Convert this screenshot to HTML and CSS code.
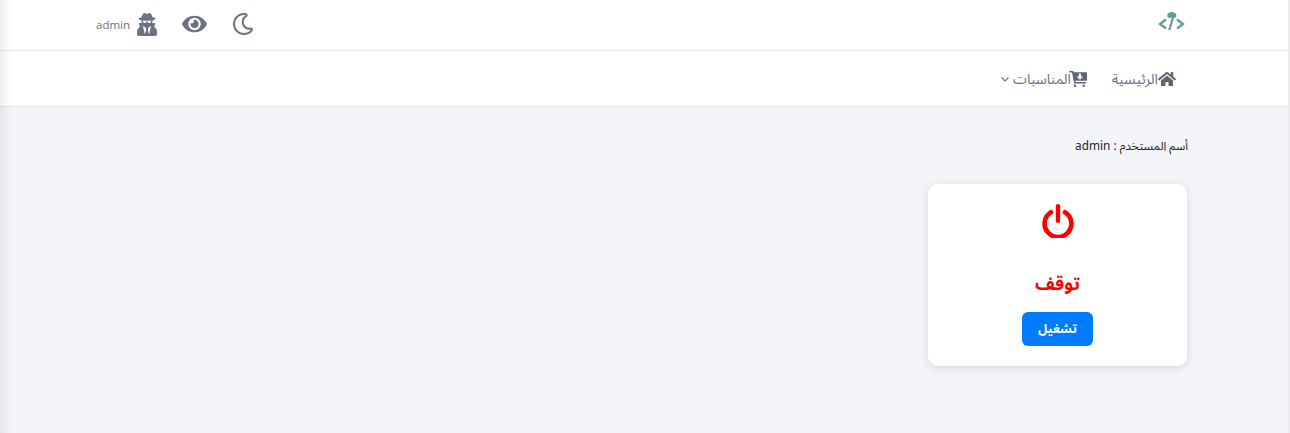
FILE: index.html
```html
<!DOCTYPE html>
<html lang="ar" dir="rtl">
<head>
<meta charset="utf-8">
<title>لوحة التحكم</title>
<link rel="stylesheet" href="styles.css">
</head>
<body>
<div class="side-shadow"></div>
<div class="app">
  <header class="topbar">
    <a class="logo" href="#">
      <svg width="27" height="18" viewBox="0 0 27 18"><g fill="none" stroke="#5f9c97" stroke-width="2.2"><path d="M8 7.500 2 12l6 4.500"/><path d="M19 7.500 25 12l-6 4.500"/><path d="M14.800 6 11.500 17.500" stroke-linecap="round"/></g><path fill="#5f9c97" d="M13.500 0c2.200 0 4.300 1 4.800 2.800.4 1.500-.5 3-1.700 3.200-.8.200-1.500-.4-2.300-.4-.9 0-1.900.9-3 .5-1.500-.5-2.400-2-1.900-3.500C9.900 1 11.700 0 13.500 0z"/></svg>
    </a>
    <div class="tools">
      <svg class="ico-moon" viewBox="0 0 512 512"><path d="M279.135 512c78.756 0 150.982-35.804 198.844-94.775 28.27-34.831-2.558-85.722-46.249-77.401-82.348 15.683-158.272-47.268-158.272-130.792 0-48.424 26.06-92.292 67.434-115.836 38.745-22.05 28.999-80.788-15.022-88.919A257.936 257.936 0 0 0 279.135 0c-141.36 0-256 114.575-256 256 0 141.36 114.576 256 256 256zm0-464c12.985 0 25.689 1.201 38.016 3.478-54.76 31.163-91.693 90.042-91.693 157.554 0 113.848 103.641 199.2 215.252 177.944C402.574 433.964 344.366 464 279.135 464c-114.875 0-208-93.125-208-208s93.125-208 208-208z"/></svg>
      <svg class="ico-eye" viewBox="0 0 576 512"><path d="M572.52 241.4C518.29 135.59 410.93 64 288 64S57.68 135.64 3.48 241.41a32.35 32.35 0 0 0 0 29.19C57.71 376.41 165.07 448 288 448s230.32-71.64 284.52-177.41a32.35 32.35 0 0 0 0-29.19zM288 400a144 144 0 1 1 144-144 143.93 143.93 0 0 1-144 144zm0-240a95.31 95.31 0 0 0-25.31 3.79 47.85 47.85 0 0 1-66.9 66.9A95.78 95.78 0 1 0 288 160z"/></svg>
      <div class="user">
        <svg class="ico-user" viewBox="0 0 448 512"><path d="M383.9 308.3l23.9-62.6c4-10.5-3.7-21.7-15-21.7h-58.5c11-18.9 17.8-40.6 17.8-64v-.3c39.2-7.8 64-19.1 64-31.7 0-13.3-27.3-25.1-70.1-33-9.2-32.8-27-65.8-40.6-82.8-9.5-11.9-25.9-15.6-39.5-8.8l-27.6 13.8c-9 4.5-19.6 4.5-28.6 0L182.1 3.4c-13.6-6.8-30-3.1-39.5 8.8-13.5 17-31.4 50-40.6 82.8-42.7 7.9-70 19.7-70 33 0 12.6 24.8 23.9 64 31.7v.3c0 23.4 6.8 45.1 17.8 64H56.3c-11.500 0-19.2 11.7-14.7 22.3l25.8 60.2C27.3 329.8 0 372.7 0 422.4v44.8C0 491.9 20.1 512 44.8 512h358.4c24.7 0 44.8-20.1 44.8-44.8v-44.8c0-48.4-25.8-90.4-64.1-114.1zM176 480l-41.6-192 49.6 32 24 40-32 120zm96 0l-32-120 24-40 49.6-32L272 480zm41.7-298.5c-3.9 11.9-7 24.6-16.5 33.4-10.1 9.3-48 22.4-64-25-2.8-8.4-15.4-8.4-18.3 0-17 50.2-56 32.4-64 25-9.5-8.8-12.7-21.5-16.5-33.4-.8-2.5-6.3-5.7-6.3-5.8v-10.8c28.3 3.6 61 5.8 96 5.8s67.7-2.1 96-5.8v10.8c-.1.1-5.6 3.2-6.4 5.8z"/></svg>
        <span class="user-name">admin</span>
      </div>
    </div>
  </header>
  <nav class="navbar">
    <a class="nav-item" href="#">
      <svg class="ico-nav" viewBox="0 0 576 512"><path d="M280.37 148.26L96 300.11V464a16 16 0 0 0 16 16l112.06-.29a16 16 0 0 0 15.92-16V368a16 16 0 0 1 16-16h64a16 16 0 0 1 16 16v95.64a16 16 0 0 0 16 16.05L464 480a16 16 0 0 0 16-16V300L295.67 148.26a12.19 12.19 0 0 0-15.3 0zM571.6 251.47L488 182.56V44.05a12 12 0 0 0-12-12h-56a12 12 0 0 0-12 12v72.61L318.47 43a48 48 0 0 0-61 0L4.34 251.47a12 12 0 0 0-1.6 16.9l25.5 31A12 12 0 0 0 45.15 301l235.22-193.74a12.19 12.19 0 0 1 15.3 0L530.9 301a12 12 0 0 0 16.9-1.6l25.5-31a12 12 0 0 0-1.7-16.93z"/></svg>
      <span>الرئيسية</span>
    </a>
    <a class="nav-item nav-events" href="#">
      <svg class="ico-nav" viewBox="0 0 576 512"><path fill-rule="evenodd" d="M16 0h110c8 0 14 5 16 12l6 28h412c9 0 16 7 16 16v240c0 9-7 16-16 16H200l8 40h330c6 0 8 4 6 9l-8 31c-1 4-4 6-8 6H176c-8 0-14-5-16-12L96 48H16C7 48 0 41 0 32V16C0 7 7 0 16 0zM316 88v84h-52c-10 0-14 11-8 18l84 82c5 5 12 5 17 0l84-82c7-7 2-18-8-18h-52V88c0-7-5-12-12-12h-42c-6 0-11 5-11 12zM190 430a41 41 0 1 1 0 82 41 41 0 1 1 0-82zM470 430a41 41 0 1 1 0 82 41 41 0 1 1 0-82z"/></svg>
      <span class="events-label">المناسبات</span>
      <svg class="ico-chev" viewBox="0 0 10 10"><path d="M1.500 3.500 5 7l3.500-3.500" fill="none" stroke="#6b7280" stroke-width="1.100"/></svg>
    </a>
  </nav>
  <main class="content">
    <p class="username">أسم المستخدم : admin</p>
    <section class="card">
      <svg class="ico-power" viewBox="0 0 32 34"><path d="M9 8.200a13.400 13.400 0 1 0 14 0" fill="none" stroke="#ff0000" stroke-width="4.600" stroke-linecap="round"/><path d="M16 2.200v14.600" fill="none" stroke="#ff0000" stroke-width="4.400" stroke-linecap="round"/></svg>
      <h2 class="status">توقف</h2>
      <button class="btn-start" type="button">تشغيل</button>
    </section>
  </main>
</div>
</body>
</html>
```
FILE: styles.css
```css
* { box-sizing: border-box; }
html, body { height: 100%; }
body {
  margin: 0;
  background: #e9e9ee;
  font-family: "Noto Sans Arabic", "Open Sans", "DejaVu Sans", sans-serif;
  overflow: hidden;
}
a { text-decoration: none; color: inherit; }
.side-shadow {
  position: absolute;
  top: 0; bottom: 0; left: 0;
  width: 12px;
  background: linear-gradient(to right, rgba(0,0,0,.06), rgba(0,0,0,0));
  z-index: 2;
}
.app {
  margin-right: 2px;
  height: 100%;
  display: flex;
  flex-direction: column;
  background: #f4f5f9;
}
.topbar {
  height: 51px;
  flex: none;
  background: #fff;
  border-bottom: 1px solid #e5e5e8;
  display: flex;
  align-items: center;
  justify-content: space-between;
  padding: 0 103px 0 96px;
}
.logo { display: flex; margin-top: -8px; }
.tools { display: flex; align-items: center; margin-top: -2px; }
.tools svg { fill: #6b7280; display: block; }
.ico-moon { width: 22px; height: 22px; margin-left: 25px; }
.ico-eye { width: 25px; height: 22px; margin-left: 25px; }
.user { display: flex; align-items: center; gap: 7px; }
.ico-user { width: 20px; height: 23px; }
.user-name { font: 11.5px "Open Sans", sans-serif; color: #6b7280; }
.navbar {
  height: 56px;
  flex: none;
  background: #fff;
  border-bottom: 1px solid #e2e2e6;
  display: flex;
  align-items: center;
  padding: 0 112px 0 0;
  gap: 25px;
  color: #6b7280;
  font-size: 14.4px;
}
.nav-item { display: flex; align-items: center; }
.nav-item span { position: relative; top: 1px; }
.nav-events { font-size: 14px; }
.events-label { margin-right: -2px; }
.ico-nav { width: 18px; height: 16px; fill: #5f6672; }
.ico-chev { width: 10px; height: 10px; margin-right: 3px; }
.content { flex: 1; padding: 31px 100px 0 0; }
.username {
  margin: 0;
  font-size: 11.8px;
  line-height: 18px;
  color: #212529;
}
.card {
  margin: 28px 1px 0 0;
  width: 259px;
  height: 182px;
  background: #fff;
  border-radius: 10px;
  box-shadow: 0 2px 10px rgba(0,0,0,.12);
  display: flex;
  flex-direction: column;
  align-items: center;
  padding-top: 20px;
}
.ico-power { width: 32px; height: 34px; display: block; }
.status {
  margin: 32px 0 0;
  font-size: 18px;
  line-height: 28px;
  font-weight: 700;
  color: #ff0000;
}
.btn-start {
  margin-top: 14px;
  width: 71px;
  height: 34px;
  border: 0;
  border-radius: 6px;
  background: #007bff;
  color: #fff;
  font-family: inherit;
  font-size: 12.5px;
  font-weight: 700;
}
```
